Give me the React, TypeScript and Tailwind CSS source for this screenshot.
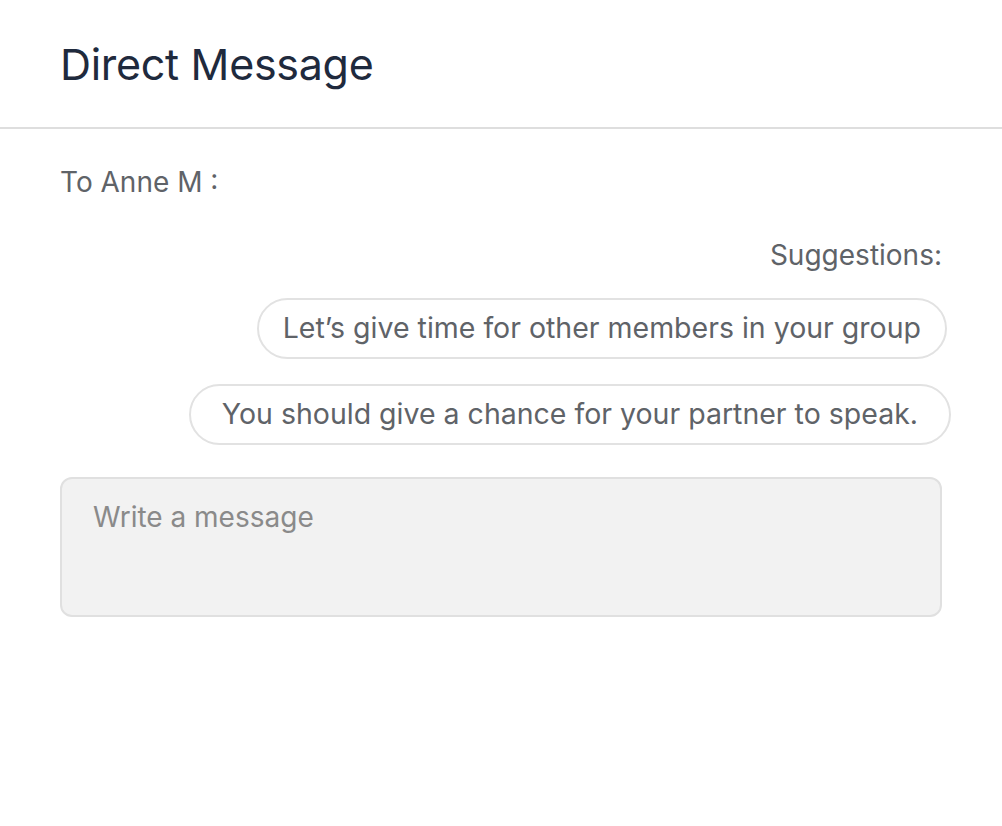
const suggestions = [
  { text: "Let’s give time for other members in your group", cls: "mr-[55px] px-[24px]" },
  { text: "You should give a chance for your partner to speak.", cls: "mr-[51px] px-[31px]" },
];

const App = () => {
  return (
    <div className="min-h-[826px] bg-white font-['Inter',sans-serif] text-[#5f6368]">
      <header className="h-[129px] border-b-2 border-[#dedede] flex items-center px-[60px]">
        <h1 className="text-[43px] text-[#1f2a3d] tracking-[-0.3px] mt-[2px]">Direct Message</h1>
      </header>
      <div className="px-[60px] pt-[35px] text-[28px]">
        <p className="leading-[36px]">To Anne M :</p>
        <p className="mt-[37px] text-right leading-[36px]">Suggestions:</p>
        <div className="flex flex-col items-end mt-[25px] gap-[25px] -mr-[60px]">
          {suggestions.map((s) => (
            <button
              key={s.text}
              className={`h-[61px] rounded-full border-2 border-[#e2e2e2] bg-white text-[28.5px] text-[#5f6368] ${s.cls}`}
            >
              {s.text}
            </button>
          ))}
        </div>
        <textarea
          placeholder="Write a message"
          className="mt-[32px] block w-full h-[140px] rounded-[12px] border-2 border-[#e0e0e0] bg-[#f2f2f2] px-[31px] pt-[20px] pb-[14px] text-[28px] leading-[36px] placeholder:text-[#8a8a8a] resize-none outline-none"
        />
      </div>
    </div>
  );
};

export default App;
